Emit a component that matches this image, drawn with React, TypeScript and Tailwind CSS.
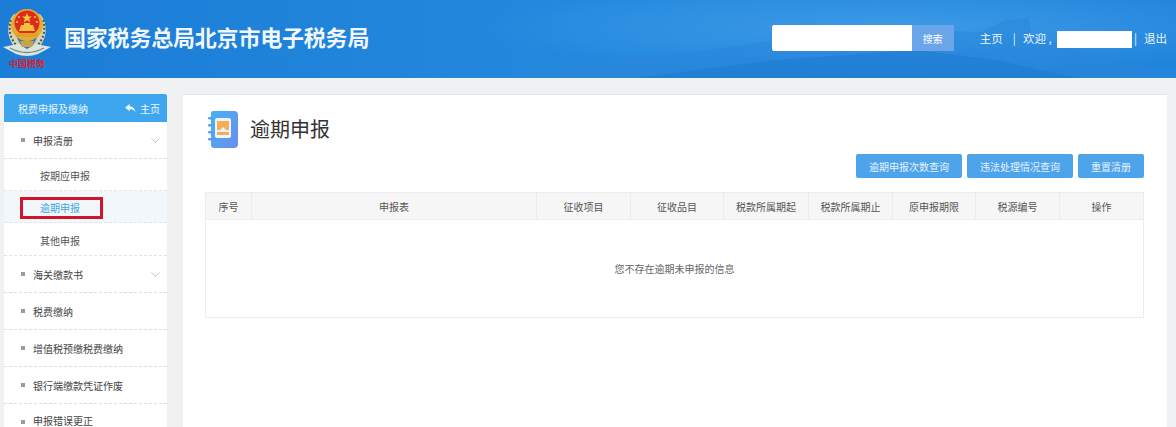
import { ChevronDown } from "lucide-react";

const font = { fontFamily: '"Noto Sans CJK SC", "Noto Sans", sans-serif' };

const columns = [
  { label: "序号", width: "w-[46px]" },
  { label: "申报表", width: "w-[285px]" },
  { label: "征收项目", width: "w-[94px]" },
  { label: "征收品目", width: "w-[93px]" },
  { label: "税款所属期起", width: "w-[85px]" },
  { label: "税款所属期止", width: "w-[84px]" },
  { label: "原申报期限", width: "w-[83px]" },
  { label: "税源编号", width: "w-[84px]" },
  { label: "操作", width: "flex-1" },
];

function Emblem() {
  return (
    <svg viewBox="0 0 50 72" className="w-[50px] h-[72px]">
      {/* wheat wreath */}
      <path d="M12 10 C3 20 5 36 14 44 L20 42 C13 34 11 22 16 12 Z" fill="#d9d2b4" />
      <path d="M38 10 C47 20 45 36 36 44 L30 42 C37 34 39 22 34 12 Z" fill="#d9d2b4" />
      <path d="M9 16 C6 24 8 34 14 41" fill="none" stroke="#3e5f4d" strokeWidth="2" strokeDasharray="2 2" />
      <path d="M41 16 C44 24 42 34 36 41" fill="none" stroke="#3e5f4d" strokeWidth="2" strokeDasharray="2 2" />
      <circle cx="25" cy="21" r="16" fill="#e4ad32" />
      <circle cx="25" cy="19" r="12.5" fill="#e02a1d" />
      <path d="M25 9l1.400 3.400 3.400.2-2.600 2.200 1 3.400-3.200-1.900-3.200 1.900 1-3.400-2.600-2.200 3.400-.2z" fill="#f5c93f" />
      <circle cx="17" cy="13" r="1.100" fill="#f5c93f" />
      <circle cx="33" cy="13" r="1.100" fill="#f5c93f" />
      <circle cx="15" cy="18" r="1.100" fill="#f5c93f" />
      <circle cx="35" cy="18" r="1.100" fill="#f5c93f" />
      <path d="M17 27h16l-2-6h-3v-2h-6v2h-3z" fill="#f3c23c" />
      <path d="M14 29h22v4H14z" fill="#e0a02a" />
      {/* ribbon */}
      <path d="M1 43 L16 40 L25 45 L34 40 L49 43 L36 50 Q25 54 14 50 Z" fill="#dfe3e0" />
      <path d="M8 44 Q25 53 42 44" fill="none" stroke="#6f8f82" strokeWidth="1.400" />
      <path d="M18 37h14l-2 6h-10z" fill="#c9a24a" />
    </svg>
  );
}

function NotebookIcon() {
  return (
    <svg viewBox="0 0 30 37" className="w-[30px] h-[37px] shrink-0">
      <defs>
        <linearGradient id="nb" x1="0" y1="0" x2="1" y2="1">
          <stop offset="0" stopColor="#45b4ee" />
          <stop offset="1" stopColor="#6b8df0" />
        </linearGradient>
      </defs>
      <path d="M5 0h21a4 4 0 0 1 4 4v29a4 4 0 0 1-4 4H6a3 3 0 0 1-3-3V2a2 2 0 0 1 2-2z" fill="url(#nb)" />
      <rect x="0" y="6" width="6" height="2.400" rx="1.200" fill="#4fa8ee" />
      <rect x="0" y="13" width="6" height="2.400" rx="1.200" fill="#4fa8ee" />
      <rect x="0" y="20" width="6" height="2.400" rx="1.200" fill="#5c9dee" />
      <rect x="0" y="27" width="6" height="2.400" rx="1.200" fill="#6394ee" />
      <rect x="7" y="7" width="16" height="20" rx="2" fill="#eef4fc" />
      <path d="M9 10h12v9h-3l-3-3-3 3H9z" fill="#f5ad58" />
      <path d="M9 21h12v3H9z" fill="#f5ad58" />
    </svg>
  );
}

function NavRow({ label, chevron, tight }: { label: string; chevron?: boolean; tight?: boolean }) {
  return (
    <div className="h-[37px] shrink-0 flex items-center pl-[17px] pr-[4px] border-b border-dashed border-[#dcdcdc]">
      <span className="w-[4px] h-[4px] bg-[#9a9a9a] mr-[8px]" />
      <span className={`flex-1 ${tight ? "pb-[3px]" : "pt-[1px]"} text-[10px] text-[#444]`}>{label}</span>
      {chevron && <ChevronDown className="w-[15px] h-[15px] text-[#999]" strokeWidth={1} />}
    </div>
  );
}

function SubRow({ label, last }: { label: string; last?: boolean }) {
  return (
    <div
      className={`${last ? "h-[33px] pt-[2px]" : "h-[32px] pt-[1px]"} shrink-0 flex items-center pl-[36px] text-[10px] text-[#555] border-b border-dashed border-[#e4e4e4]`}
    >
      {label}
    </div>
  );
}

function ActionButton({ label, width }: { label: string; width: string }) {
  return (
    <button className={`${width} h-[24px] rounded-[2px] bg-[#4ea4ea] text-[10px] text-white/85`}>{label}</button>
  );
}

export default function App() {
  return (
    <div className="w-[1176px] h-[427px] overflow-hidden flex flex-col bg-[#f0f1f3]" style={font}>
      <header className="relative h-[78px] shrink-0 flex items-center overflow-hidden bg-gradient-to-r from-[#1c7dd6] via-[#2389de] to-[#1f84db]">
        {/* faint great wall backdrop */}
        <svg viewBox="0 0 700 78" className="absolute right-0 top-0 w-[700px] h-[78px]">
          <defs>
            <radialGradient id="glow" cx="0.6" cy="0.35" r="0.6">
              <stop offset="0" stopColor="#5aaef0" stopOpacity="0.5" />
              <stop offset="1" stopColor="#5aaef0" stopOpacity="0" />
            </radialGradient>
          </defs>
          <rect width="700" height="78" fill="url(#glow)" />
          <path d="M0 78 L120 62 L230 50 L330 36 L420 30 L505 32 L530 20 L552 18 L556 36 L640 60 L700 70 V78 Z" fill="#2a86da" opacity="0.5" />
          <path d="M160 78 L300 60 L440 50 L520 60 L600 78 Z" fill="#1b77cf" opacity="0.5" />
        </svg>
        <div className="relative ml-[2px] w-[50px] h-[72px] mt-[2px]">
          <Emblem />
          <span className="absolute left-[7px] top-[55px] text-[9px] leading-none font-bold text-[#d9202a] whitespace-nowrap">
            中国税务
          </span>
        </div>
        <h1 className="relative ml-[12px] mt-[-6px] text-[22px] font-bold tracking-[-0.2px] text-white/95 whitespace-nowrap">
          国家税务总局北京市电子税务局
        </h1>
        <div className="relative ml-auto mt-[-2px] flex items-center pr-[9px] text-[11.5px] text-white/95">
          <input className="w-[140px] h-[26px] bg-white rounded-l-[2px] outline-none" />
          <button className="w-[42px] h-[26px] bg-[#6aa5ea] text-[10px] text-white">搜索</button>
          <span className="ml-[26px] pt-[2px]">主页</span>
          <span className="ml-[10px] pt-[2px]">|</span>
          <span className="ml-[7px] pt-[2px] w-[34px] whitespace-nowrap">欢迎 ,</span>
          <span className="w-[75px] h-[17px] mt-[2px] bg-white" />
          <span className="ml-[2px] pt-[2px]">|</span>
          <span className="ml-[7px] pt-[2px]">退出</span>
        </div>
      </header>

      <div className="flex-1 min-h-0 flex items-start pt-[16px] pl-[4px] pr-[9px]">
        <aside className="w-[163px] h-[340px] shrink-0 bg-white overflow-hidden rounded-t-[2px]">
          <div className="h-[28px] flex items-center pl-[14px] pr-[7px] bg-[#3ea6ef] text-[10px] text-white/90">
            <span className="flex-1">税费申报及缴纳</span>
            <svg viewBox="0 0 12 10" className="w-[11px] h-[9px] mr-[4px]">
              <path d="M5 0 L0 4 L5 8 V5.500 C8 5.500 10 6.500 11.500 9 C11 5 8.500 2.700 5 2.500 Z" fill="#fff" />
            </svg>
            <span>主页</span>
          </div>
          <NavRow label="申报清册" chevron />
          <SubRow label="按期应申报" />
          <div className="relative h-[32px] flex items-center pl-[36px] pt-[1px] text-[10px] text-[#3ea6dc] bg-[#f2f7fc] border-b border-dashed border-[#e0e6ee]">
            逾期申报
            <span className="absolute left-[16px] top-[6px] w-[83px] h-[22px] border-[3px] border-[#d0142c]" />
          </div>
          <SubRow label="其他申报" last />
          <NavRow label="海关缴款书" chevron />
          <NavRow label="税费缴纳" />
          <NavRow label="增值税预缴税费缴纳" />
          <NavRow label="银行端缴款凭证作废" />
          <NavRow label="申报错误更正" tight />
        </aside>

        <main className="ml-[16px] flex-1 h-[340px] bg-white border-t border-[#e6e6e6] pl-[22px] pr-[23px]">
          <div className="flex items-center h-[60px] pl-[3px] pt-[8px] gap-[12px]">
            <NotebookIcon />
            <h2 className="text-[20px] text-[#333] font-normal">逾期申报</h2>
          </div>
          <div className="flex justify-end gap-[5px] mt-[-1px]">
            <ActionButton label="逾期申报次数查询" width="w-[106px]" />
            <ActionButton label="违法处理情况查询" width="w-[106px]" />
            <ActionButton label="重置清册" width="w-[66px]" />
          </div>
          <div className="mt-[14px] border border-[#ececec]">
            <div className="flex h-[27px] bg-[#f6f6f6] border-b border-[#ececec]">
              {columns.map((c) => (
                <div
                  key={c.label}
                  className={`${c.width} flex items-center justify-center text-[10px] text-[#555] border-r border-[#ececec] last:border-r-0`}
                >
                  {c.label}
                </div>
              ))}
            </div>
            <div className="h-[97px] flex items-center justify-center text-[10px] text-[#666]">
              您不存在逾期未申报的信息
            </div>
          </div>
        </main>
      </div>
    </div>
  );
}
